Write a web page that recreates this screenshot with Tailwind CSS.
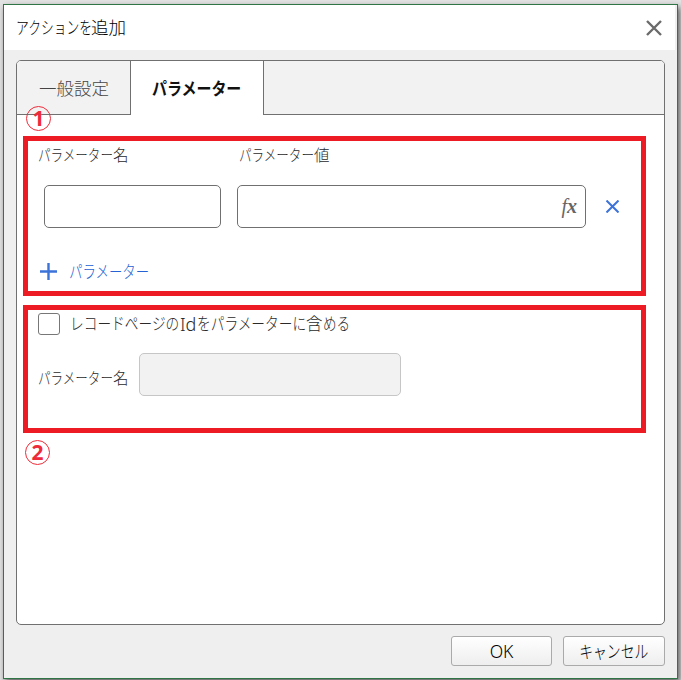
<!DOCTYPE html>
<html lang="ja">
<head>
<meta charset="utf-8">
<title>アクションを追加</title>
<script src="https://cdn.jsdelivr.net/npm/@tailwindcss/browser@4"></script>
</head>
<body class="w-[681px] h-[680px] overflow-hidden bg-[#e3e3e3] pl-[3px] pt-1 font-['Noto_Sans','Noto_Sans_CJK_JP',sans-serif] font-light text-[#2a2a2a] whitespace-nowrap">
<div class="w-[675px] h-[675px] border border-[#2f7545] bg-[#efefef] shadow-[2px_3px_6px_rgba(0,0,0,0.6)] flex flex-col">
  <header class="w-[671px] h-[45px] shrink-0 bg-white flex items-center justify-between pl-3 pr-[13px] text-black">
    <h1 class="flex text-[17.5px] leading-[24px] pb-px"><span class="w-[75px]"><span class="inline-block origin-left scale-x-[0.73]">アクションを</span></span><span>追加</span></h1>
    <svg class="w-4 h-4" viewBox="0 0 16 16" fill="none" stroke="#6b6b6b" stroke-width="2.4"><path d="M1 1 15 15M15 1 1 15"/></svg>
  </header>
  <main class="relative ml-3 mt-[10px] w-[649px] h-[565px] shrink-0 border border-[#707070] rounded-[5px] bg-white">
    <nav class="flex h-[54px] bg-[#f2f2f2] rounded-t-[4px]">
      <div class="w-[113px] border-b border-[#707070] pl-[22px] pt-[14px] text-[17.5px] leading-[26px] text-[#444]">一般設定</div>
      <div class="w-[134px] border-x border-[#707070] bg-white pl-[21px] pt-[14px] text-[17.5px] leading-[26px] font-bold text-[#111]"><span class="inline-block origin-left scale-x-[0.855]">パラメーター</span></div>
      <div class="flex-1 border-b border-[#707070]"></div>
    </nav>
    <section class="ml-[6px] mt-[21px] w-[623px] h-[160px] border-[5px] border-[#ed1c24] pl-[10px] pt-[2px]">
      <div class="flex text-[15.5px] leading-[24px]">
        <div class="flex w-[201px]"><span class="w-[75px]"><span class="inline-block origin-left scale-x-[0.81]">パラメーター</span></span><span>名</span></div>
        <div class="flex"><span class="w-[75px]"><span class="inline-block origin-left scale-x-[0.81]">パラメーター</span></span><span>値</span></div>
      </div>
      <div class="flex items-center mt-[18px] ml-[6px]">
        <div class="w-[177px] h-[43px] border border-[#707070] rounded-[5px]"></div>
        <div class="ml-4 w-[349px] h-[43px] border border-[#707070] rounded-[5px] flex items-center justify-end pr-2 pb-[2px] font-['Liberation_Serif',serif] italic text-[20px] text-[#666]"><span class="font-normal">f</span><span class="font-bold text-[20px]">x</span></div>
        <svg class="ml-5 w-[13px] h-[13px]" viewBox="0 0 13 13" fill="none" stroke="#3b73d9" stroke-width="2"><path d="M.5.5 12.5 12.5M12.5.5.5 12.5"/></svg>
      </div>
      <div class="flex items-center mt-[30px] ml-[2px] text-[#2563d4] text-[17px] leading-[26px]">
        <svg class="w-[17px] h-[17px]" viewBox="0 0 17 17" stroke="#3b73d9" stroke-width="2.4"><path d="M0 8.5H17M8.5 0V17"/></svg>
        <span class="ml-3 pt-px inline-block origin-left scale-x-[0.79]">パラメーター</span>
      </div>
    </section>
    <section class="ml-[6px] mt-[9px] w-[623px] h-[128px] border-[5px] border-[#ed1c24] pl-[10px] pt-[3px]">
      <div class="flex items-center">
        <span class="w-[22px] h-[22px] border border-[#777] rounded-[3px]"></span>
        <div class="flex ml-[10px] text-[16.5px] leading-[22px]"><span class="w-[110px]"><span class="inline-block origin-left scale-x-[0.83]">レコードページの</span></span><span class="w-[17px] text-[18px]">Id</span><span class="w-[109px]"><span class="inline-block origin-left scale-x-[0.83]">をパラメーターに</span></span><span class="w-[17px]">含</span><span class="inline-block origin-left scale-x-[0.82]">める</span></div>
      </div>
      <div class="flex items-center mt-[18px]">
        <div class="flex w-[101px] pt-[6px] text-[15.5px] leading-[24px]"><span class="w-[75px]"><span class="inline-block origin-left scale-x-[0.81]">パラメーター</span></span><span>名</span></div>
        <div class="w-[262px] h-[43px] border border-[#c6c6c6] rounded-[5px] bg-[#f2f2f2]"></div>
      </div>
    </section>
    <div class="absolute left-[9px] top-[45px] w-[25px] h-[25px] rounded-full border-[1.5px] border-[#ee2b38] flex items-center justify-center pb-[2px] text-[21px] leading-[20px] font-bold text-[#ee2b38]">1</div>
    <div class="absolute left-[8px] top-[379px] w-[25px] h-[25px] rounded-full border-[1.5px] border-[#ee2b38] flex items-center justify-center pb-[2px] text-[21px] leading-[20px] font-bold text-[#ee2b38]">2</div>
  </main>
  <footer class="flex justify-end gap-[11px] mt-[11px] pr-3 text-[17.5px] text-black">
    <button class="w-[101px] h-[30px] border border-[#aaa] rounded-[3px] bg-linear-to-b from-white to-[#eee] flex items-center justify-center">OK</button>
    <button class="w-[102px] h-[30px] border border-[#aaa] rounded-[3px] bg-linear-to-b from-white to-[#eee] flex items-center justify-center"><span class="inline-block scale-x-[0.79]">キャンセル</span></button>
  </footer>
</div>
</body>
</html>
